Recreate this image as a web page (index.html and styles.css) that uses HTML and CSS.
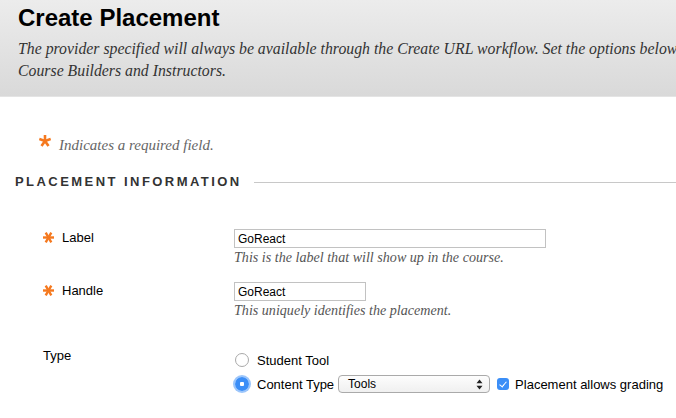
FILE: index.html
```html
<!DOCTYPE html>
<html lang="en">
<head>
    <meta charset="UTF-8">
    <title>Create Placement</title>
    <link rel="stylesheet" href="styles.css">
</head>
<body>
    <!-- Page header -->
    <header class="page-header">
        <h1>Create Placement</h1>
        <p class="page-desc">The provider specified will always be available through the Create URL workflow. Set the options below<br>Course Builders and Instructors.</p>
    </header>

    <div class="content">
        <p class="required-note">
            <svg class="star-big" width="12" height="12" viewBox="0 0 12 12">
                <g stroke="#f5791f" stroke-width="2.6" stroke-linecap="butt">
                    <line x1="6" y1="6" x2="6" y2="0"/>
                    <line x1="6" y1="6" x2="11.7" y2="4.1"/>
                    <line x1="6" y1="6" x2="9.5" y2="10.9"/>
                    <line x1="6" y1="6" x2="2.5" y2="10.9"/>
                    <line x1="6" y1="6" x2="0.3" y2="4.1"/>
                </g>
            </svg>
            Indicates a required field.
        </p>

        <!-- Placement information -->
        <h2 class="section-title"><span>Placement Information</span></h2>

        <div class="form-row">
            <label class="field-label" for="label"><svg class="star" width="11" height="11" viewBox="0 0 11 11"><g stroke="#f5791f" stroke-width="2.4"><line x1="0" y1="5.5" x2="11" y2="5.5"/><line x1="2.7" y1="0.7" x2="8.3" y2="10.3"/><line x1="8.3" y1="0.7" x2="2.7" y2="10.3"/></g></svg>Label</label>
            <div class="field">
                <input class="text-input wide" type="text" id="label" value="GoReact">
                <div class="help">This is the label that will show up in the course.</div>
            </div>
        </div>

        <div class="form-row">
            <label class="field-label" for="handle"><svg class="star" width="11" height="11" viewBox="0 0 11 11"><g stroke="#f5791f" stroke-width="2.4"><line x1="0" y1="5.5" x2="11" y2="5.5"/><line x1="2.7" y1="0.7" x2="8.3" y2="10.3"/><line x1="8.3" y1="0.7" x2="2.7" y2="10.3"/></g></svg>Handle</label>
            <div class="field">
                <input class="text-input short" type="text" id="handle" value="GoReact">
                <div class="help">This uniquely identifies the placement.</div>
            </div>
        </div>

        <div class="form-row type-row">
            <div class="field-label plain">Type</div>
            <div class="field options">
                <label class="option">
                    <input type="radio" name="type" class="radio">
                    Student Tool
                </label>
                <div class="option">
                    <label class="option-inner">
                        <input type="radio" name="type" class="radio" checked>
                        Content Type
                    </label>
                    <div class="select">
                        <span>Tools</span>
                        <svg width="7" height="11" viewBox="0 0 7 11"><path d="M3.5 0.5 L6.5 4.3 H0.5 Z M3.5 10.5 L0.5 6.7 H6.5 Z" fill="#222"/></svg>
                    </div>
                    <label class="option-inner check-label">
                        <input type="checkbox" class="check" checked>
                        Placement allows grading
                    </label>
                </div>
            </div>
        </div>
    </div>
</body>
</html>
```

FILE: styles.css
```css
/* Base */
body {
    margin: 0;
    font-family: 'Liberation Sans', Arial, sans-serif;
    font-size: 13px;
    color: #000;
    background: #fff;
    overflow: hidden;
}

/* Header */
.page-header {
    height: 97px;
    box-sizing: border-box;
    padding: 4px 0 0 18px;
    background: linear-gradient(#ececec, #d9d9d9);
    border-bottom: 1px solid #e4e4e4;
    white-space: nowrap;
    overflow: hidden;
}

.page-header h1 {
    margin: 0;
    font-size: 24px;
    line-height: 28px;
    font-weight: bold;
    color: #000;
}

.page-desc {
    margin: 6px 0 0;
    font-family: 'Liberation Serif', serif;
    font-style: italic;
    font-size: 15.8px;
    line-height: 22px;
    color: #333;
}

/* Content */
.content {
    padding-top: 39px;
}

.required-note {
    display: flex;
    align-items: center;
    gap: 8px;
    margin: 0 0 0 39px;
    font-family: 'Liberation Serif', serif;
    font-style: italic;
    font-size: 15px;
    line-height: 18px;
    color: #666;
}

.required-note .star-big {
    margin-top: -8px;
}

.section-title {
    display: flex;
    align-items: center;
    margin: 19px 0 0 15px;
    font-size: 13px;
    font-weight: bold;
    letter-spacing: 2.45px;
    text-transform: uppercase;
    color: #333;
    line-height: 18px;
}

.section-title::after {
    content: "";
    flex: 1;
    height: 1px;
    background: #c8c8c8;
    margin-left: 12px;
}

/* Form rows */
.form-row {
    display: grid;
    grid-template-columns: 191px 1fr;
    padding-left: 43px;
    margin-top: 16px;
}

.form-row:first-of-type {
    margin-top: 38px;
}

.field-label {
    display: flex;
    align-items: center;
    gap: 8px;
    height: 16px;
    color: #000;
}

.text-input {
    display: block;
    box-sizing: border-box;
    height: 19px;
    margin: 0;
    padding: 0 3px;
    border: 1px solid #c2c2c2;
    font-family: 'Liberation Sans', Arial, sans-serif;
    font-size: 12px;
    color: #000;
    outline: none;
}

.text-input.wide {
    width: 312px;
}

.text-input.short {
    width: 132px;
}

.help {
    margin-top: 1px;
    font-family: 'Liberation Serif', serif;
    font-style: italic;
    font-size: 14.1px;
    line-height: 17px;
    color: #555;
}

/* Type options */
.type-row {
    margin-top: 28px;
}

.options {
    display: flex;
    flex-direction: column;
    gap: 6px;
    padding-top: 4px;
}

.option {
    display: flex;
    align-items: center;
    height: 18px;
}

.option-inner {
    display: flex;
    align-items: center;
}

.radio {
    appearance: none;
    box-sizing: border-box;
    width: 14px;
    height: 14px;
    margin: 0 8px 0 1px;
    border: 1px solid #a9a9a9;
    border-radius: 50%;
    background: #fff;
}

.radio:checked {
    border: none;
    background: radial-gradient(circle, #fff 0 2px, #3b8ef7 2.5px);
    box-shadow: 0 0 0 2px #9cc6fb;
    outline: none;
}

.select {
    display: flex;
    align-items: center;
    justify-content: space-between;
    box-sizing: border-box;
    width: 152px;
    height: 18px;
    margin-left: 4px;
    padding: 0 6px 0 9px;
    border: 1px solid #aaa;
    border-radius: 4px;
    background: linear-gradient(#fdfdfd, #f0f0f0);
    font-size: 12px;
    color: #000;
}

.check-label {
    margin-left: 7px;
}

.check {
    appearance: none;
    box-sizing: border-box;
    width: 12px;
    height: 12px;
    margin: 0 6px 0 0;
    border-radius: 3px;
    background: #3b8ef7;
    position: relative;
}

.check:checked::after {
    content: "";
    position: absolute;
    left: 4px;
    top: 1.5px;
    width: 3px;
    height: 6px;
    border: solid #fff;
    border-width: 0 1.6px 1.6px 0;
    transform: rotate(40deg);
}
```
